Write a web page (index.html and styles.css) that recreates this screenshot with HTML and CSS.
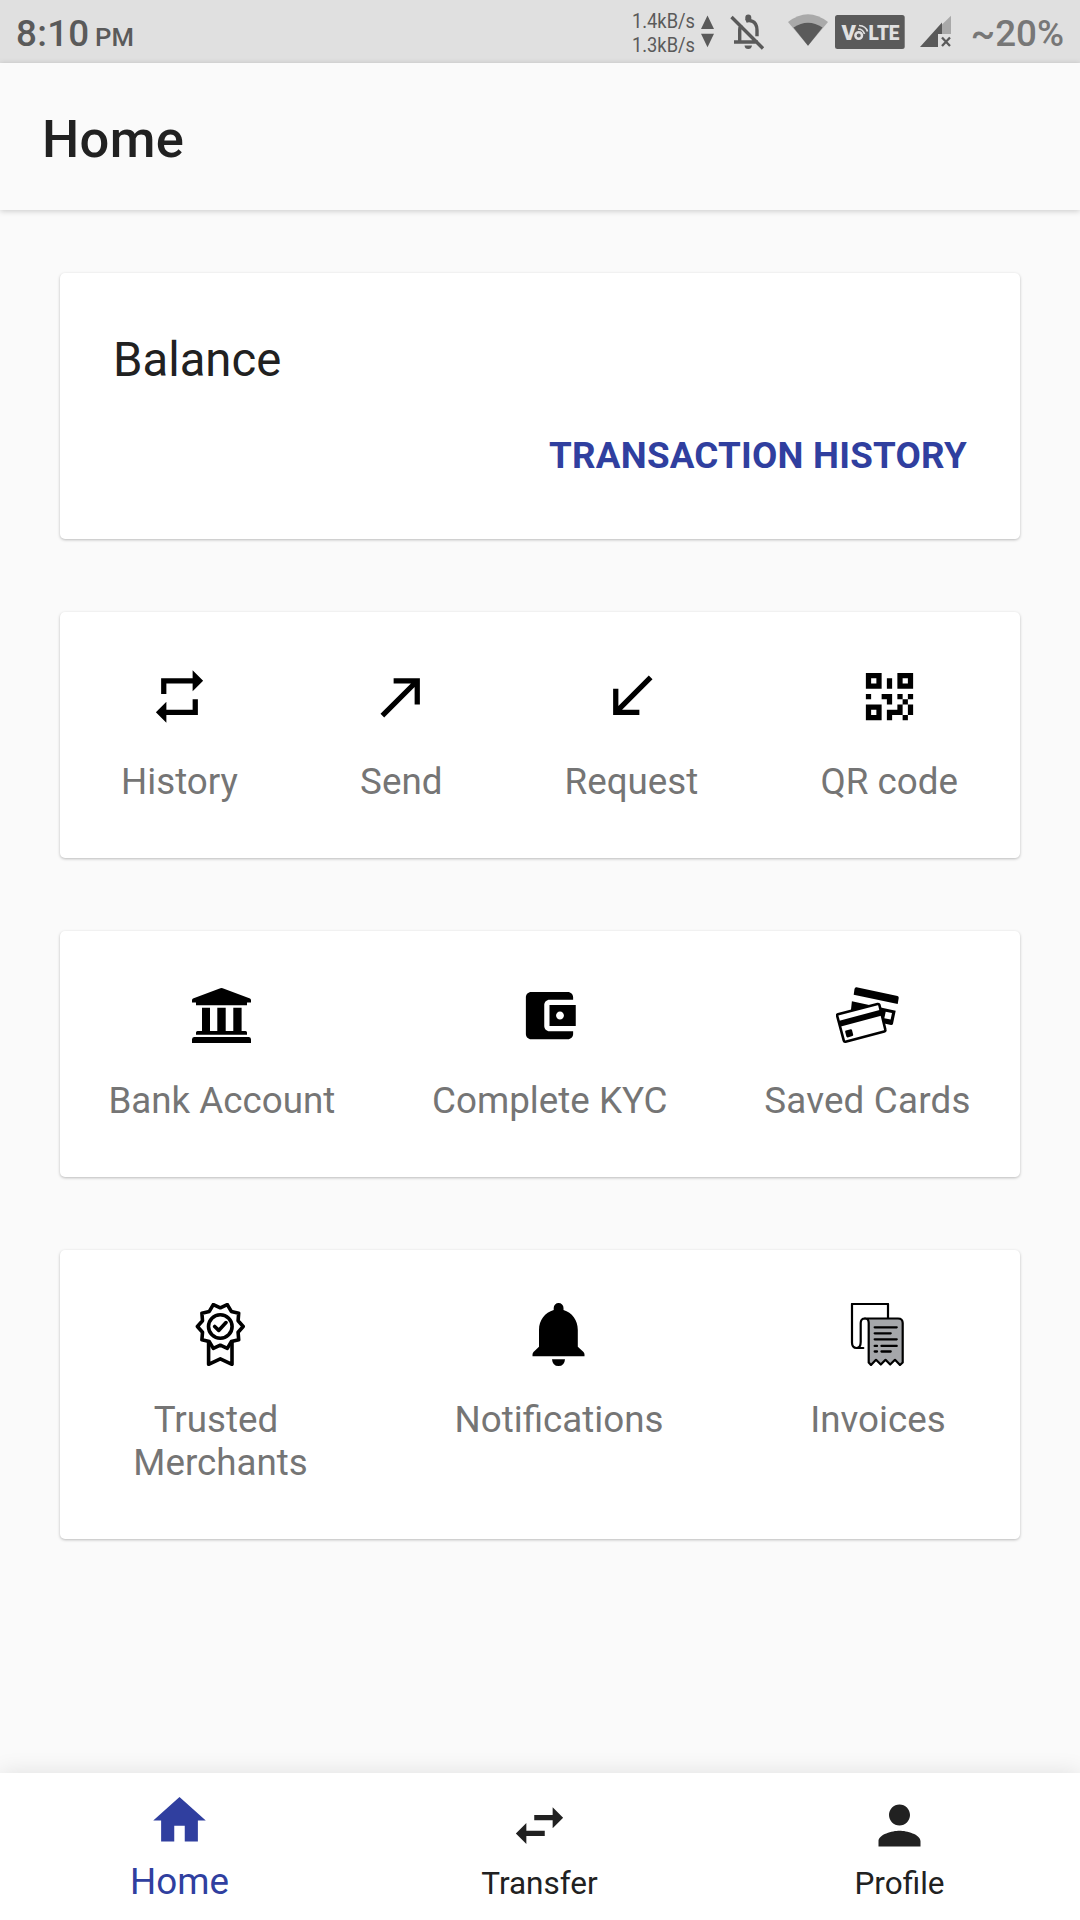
FILE: index.html
```html
<!DOCTYPE html>
<html lang="en">
<head>
<meta charset="utf-8">
<title>Home</title>
<link rel="stylesheet" href="styles.css">
</head>
<body>
<div class="screen">
  <div class="status">
    <span class="clock">8:10</span><span class="meridiem">PM</span>
    <div class="status-icons">
      <svg class="speed" width="84" height="63" viewBox="0 0 84 63">
        <text x="0" y="28" textLength="63" lengthAdjust="spacingAndGlyphs">1.4kB/s</text>
        <text x="0" y="52" textLength="63" lengthAdjust="spacingAndGlyphs">1.3kB/s</text>
        <path d="M69 29L75.500 15.500 82 29zM69 33.700h13L75.500 47.300z"/>
      </svg>
      <svg class="bell-off" width="36" height="63" viewBox="0 0 36 63">
        <g fill="none" stroke="#5a5a5a" stroke-width="3.400">
          <path d="M9.700 42V30q0-3 1.500-5.500M16 21.200q3-1.300 6 0 5 2 5 9v6M4 42h24M1.500 17L33 48.500"/>
        </g>
        <path fill="#5a5a5a" d="M15.300 20v-2.500a3 3 0 0 1 6 0V20zM14.500 45.500h7.500q-.5 3.500-3.800 3.500t-3.700-3.500z"/>
      </svg>
      <svg class="wifi" width="40" height="63" viewBox="0 0 40 63">
        <path fill="#a9a9a9" d="M0 22Q20 6.500 40 22L20 45.700z"/>
        <path fill="#5a5a5a" d="M5.500 27.500Q20 18 34.500 27.500L20 45.700z"/>
      </svg>
      <svg class="volte" width="70" height="63" viewBox="0 0 70 63">
        <rect y="15" width="69.700" height="34" rx="2.500" fill="#5a5a5a"/>
        <text x="6.500" y="39.500" textLength="14.500" lengthAdjust="spacingAndGlyphs">V</text>
        <text x="33.500" y="39.500" textLength="31" lengthAdjust="spacingAndGlyphs">LTE</text>
        <circle cx="23.700" cy="35.500" r="3.300" fill="none" stroke="#e0e0e0" stroke-width="2.500"/>
        <path d="M23 29q5 0 6.500 5M24 25.500q7 .5 8.500 6" fill="none" stroke="#e0e0e0" stroke-width="1.700"/>
      </svg>
      <svg class="signal" width="32" height="63" viewBox="0 0 32 63">
        <path fill="#a9a9a9" d="M31 15.700V34H22V24.500z"/>
        <path fill="#5a5a5a" d="M0 47L22 22.500V34h-4v13z"/>
        <path d="M22 37.500l8 8.500M30 37.500L22 46" stroke="#5a5a5a" stroke-width="2.300"/>
      </svg>
      <span class="battery">~20%</span>
    </div>
  </div>

  <header class="appbar"><h1>Home</h1></header>

  <main class="content">
    <section class="card balance">
      <h2>Balance</h2>
      <a class="history-link">TRANSACTION HISTORY</a>
    </section>

    <section class="card actions">
      <div class="action">
        <svg class="icon" viewBox="0 0 24 24"><path d="M7 7h10v3l4-4-4-4v3H5v6h2V7zm10 10H7v-3l-4 4 4 4v-3h12v-6h-2v4z"/></svg>
        <span class="label">History</span>
      </div>
      <div class="action">
        <svg class="icon" viewBox="0 0 24 24"><path d="M9 5v2h6.590L4 18.590 5.410 20 17 8.410V15h2V5z"/></svg>
        <span class="label">Send</span>
      </div>
      <div class="action">
        <svg class="icon" viewBox="0 0 24 24"><path d="M20 5.410L18.590 4 7 15.590V9H5v10h10v-2H8.410z"/></svg>
        <span class="label">Request</span>
      </div>
      <div class="action">
        <svg class="icon" viewBox="0 0 24 24"><path d="M3,11H5V13H3V11M11,5H13V9H11V5M9,11H13V15H11V13H9V11M15,11H17V13H19V11H21V13H19V15H21V19H19V21H17V19H13V21H11V17H15V15H17V13H15V11M19,19V15H17V19H19M15,3H21V9H15V3M17,5V7H19V5H17M3,3H9V9H3V3M5,5V7H7V5H5M3,15H9V21H3V15M5,17V19H7V17H5Z"/></svg>
        <span class="label">QR code</span>
      </div>
    </section>

    <section class="card actions">
      <div class="action">
        <svg class="icon" viewBox="0 0 63 63"><path d="M31.500 4Q32.500 4 34 4.800L60 14.600Q61 15.200 61 16.200V18.400H57V21.300H6V18.400H2V16.200Q2 15.200 3 14.600L29 4.800Q30.500 4 31.500 4zM12 23.700h8V47h7.300V23.700h8.400V47h7.600V23.700h8.300V47h3.900q1.500 0 1.500 1.500v2.300H6v-2.300Q6 47 7.500 47H12zM4 53h55q2 0 2 2.500V59H2v-3.500Q2 53 4 53z"/></svg>
        <span class="label">Bank Account</span>
      </div>
      <div class="action">
        <svg class="icon" viewBox="0 0 24 24"><path d="M21 18v1c0 1.100-.9 2-2 2H5c-1.110 0-2-.9-2-2V5c0-1.100.89-2 2-2h14c1.100 0 2 .9 2 2v1h-9c-1.110 0-2 .9-2 2v8c0 1.100.89 2 2 2h9zm-9-2h10V8H12v8zm4-2.500c-.83 0-1.500-.67-1.500-1.500s.67-1.500 1.500-1.500 1.500.67 1.500 1.500-.67 1.500-1.500 1.500z"/></svg>
        <span class="label">Complete KYC</span>
      </div>
      <div class="action">
        <svg class="icon" viewBox="0 0 63 63">
          <path d="M20.500 3.300L61.500 12Q63 12.500 62.700 14L61.700 19.900 17.700 10.700 18.500 5Q19 3 20.500 3.300z"/>
          <path fill-rule="evenodd" d="M15.900 17.200L59.700 26.700 57 39.800Q56.500 41.300 55 41L14.300 32zM49.700 27.800L48.300 34.300 54.600 35.600 56 29z"/>
          <path d="M2 30.300L41.500 20Q43 19.700 43.400 21L49.300 45.500Q49.700 47 48.200 47.400L9.500 57.700Q8.200 58 7.800 56.600L1.200 32Q.8 30.700 2 30.300z" fill="#fff" stroke="#000" stroke-width="2.600"/>
          <path d="M2.500 37L44.500 25.700 46 31.500 4 42.800zM10 46.600l4.700-1.300q1-.2 1.300.8l1.200 4.700q.2 1-.8 1.300L11.700 53.400q-1 .2-1.300-.8L9.200 47.900q-.2-1 .8-1.300z"/>
        </svg>
        <span class="label wide">Saved Cards</span>
      </div>
    </section>

    <section class="card actions">
      <div class="action">
        <svg class="icon" viewBox="0 0 63 63">
          <g fill="none" stroke="#000" stroke-width="3.600" stroke-linejoin="round" stroke-linecap="round" transform="translate(31.300 23.500)">
            <path d="M0-18.700L7-21.900 11-15.100 18.400-13.300 17.800-5.800 22.900 0 17.800 5.800 18.400 13.300 11 15.100 7 21.900 0 18.700-7 21.900-11 15.100-18.400 13.300-17.800 5.800-22.900 0-17.800-5.800-18.400-13.300-11-15.100-7-21.900z"/>
            <circle r="11.800"/>
            <path d="M-5.600 0l4 3.900 7.300-7.800M-11.700 16V37.800L0 32.400 11.700 37.800V16"/>
          </g>
        </svg>
        <span class="label">Trusted&nbsp;<br>Merchants</span>
      </div>
      <div class="action">
        <svg class="icon" viewBox="0 0 63 63"><path d="M26.700 7V5a4.900 5 0 0 1 9.800 0v2C45 9.500 50.800 17 50.800 27V43.700L56.500 49q1 1 1 2.500v1.700H5.500v-1.700q0-1.500 1-2.500L12 43.700V27C12 17 18 9.500 26.700 7zM25 56.200h13Q37.500 63 31.500 63T25 56.200z"/></svg>
        <span class="label">Notifications</span>
      </div>
      <div class="action">
        <svg class="icon" viewBox="0 0 63 63">
          <g fill="none" stroke="#000" stroke-width="2.200" stroke-linejoin="round" stroke-linecap="round">
            <path d="M42 15V1H6V39.500Q6 45 10.500 45H17.300M10.500 45Q14.700 45 14.700 39V20Q14.700 15.500 19 15.500"/>
            <path fill="#a5a7aa" d="M19 15.500H52Q56.700 15.500 56.700 20V59.500L54 62 49 56.800 44.200 61.500 39.500 56.800 34.800 61.500 30 56.800 25 62 22.700 59.500V20Q22.700 15.500 19 15.500z"/>
            <path d="M28.700 24.300H50.700M28.700 30.300H44.700M28.700 36.300H50.700M28.700 42.900H31M35.500 42.900H50.700M28.700 48.500H31M35.500 48.500H44.700" stroke-width="2.300"/>
          </g>
        </svg>
        <span class="label">Invoices</span>
      </div>
    </section>
  </main>

  <nav class="tabs">
    <div class="tab active">
      <svg class="icon" viewBox="0 0 24 24"><path d="M10 20v-6h4v6h5v-8h3L12 3 2 12h3v8z"/></svg>
      <span class="tab-label">Home</span>
    </div>
    <div class="tab">
      <svg class="icon" viewBox="0 0 24 24"><path d="M6.990 11L3 15l3.990 4v-3H14v-2H6.990v-3zM21 9l-3.990-4v3H10v2h7.010v3L21 9z"/></svg>
      <span class="tab-label">Transfer</span>
    </div>
    <div class="tab">
      <svg class="icon" viewBox="0 0 24 24"><path d="M12 12c2.210 0 4-1.790 4-4s-1.790-4-4-4-4 1.790-4 4 1.790 4 4 4zm0 2c-2.670 0-8 1.340-8 4v2h16v-2c0-2.660-5.330-4-8-4z"/></svg>
      <span class="tab-label">Profile</span>
    </div>
  </nav>
</div>
</body>
</html>
```
FILE: styles.css
```css
* { box-sizing: border-box; margin: 0; }

body {
  background: #fafafa;
  font-family: Roboto, "Liberation Sans", sans-serif;
}

.screen {
  width: 1080px;
  height: 1920px;
  display: flex;
  flex-direction: column;
  overflow: hidden;
}

.status {
  height: 63px;
  flex: none;
  display: flex;
  align-items: baseline;
  padding: 0 16px;
  background: #e0e0e0;
  color: #5a5a5a;
  font-weight: 500;
  line-height: 67px;
}
.clock, .battery { font-size: 36.75px; }
.clock { letter-spacing: 0.3px; }
.meridiem { font-size: 25.700px; margin-left: 5.500px; }
.battery { color: #777; margin-left: 18.500px; }
.status-icons {
  display: flex;
  align-self: stretch;
  margin-left: auto;
}
.status-icons svg { flex: none; display: block; }
.speed { fill: #5a5a5a; font-size: 21px; font-weight: 400; margin-right: 14px; }
.bell-off { margin-right: 22px; }
.wifi { margin-right: 7px; }
.volte { fill: #e0e0e0; font-size: 20px; font-weight: 900; margin-right: 15px; }

.appbar {
  height: 147px;
  flex: none;
  display: flex;
  align-items: center;
  padding: 4px 42px 0;
  box-shadow: 0 1px 6px rgba(0, 0, 0, 0.2);
}
.appbar h1 {
  font-size: 52.500px;
  font-weight: 500;
  line-height: 62px;
  letter-spacing: 0.3px;
  color: #212121;
}

.content {
  flex: 1;
  display: flex;
  flex-direction: column;
  gap: 73px;
  padding: 63px 60px 0;
}

.card {
  flex: none;
  background: #fff;
  border-radius: 5px;
  box-shadow: 0 1px 3px rgba(0, 0, 0, 0.26);
}

.balance {
  height: 266px;
  display: flex;
  flex-direction: column;
  padding: 59px 53px 0;
}
.balance h2 {
  font-size: 47.250px;
  font-weight: 400;
  line-height: 56px;
  color: #212121;
}
.history-link {
  align-self: flex-end;
  margin-top: 46px;
  font-size: 36.750px;
  font-weight: 700;
  line-height: 43px;
  letter-spacing: 0.22px;
  color: #303f9f;
}

.actions {
  display: flex;
  justify-content: space-around;
  padding: 53px 1px 55px 0;
}
.action {
  display: flex;
  flex-direction: column;
  align-items: center;
}
.icon { width: 63px; height: 63px; display: block; }
.label {
  margin-top: 32px;
  font-size: 36.750px;
  line-height: 43px;
  text-align: center;
  color: #757575;
}
.wide { letter-spacing: 0.2px; }

.tabs {
  height: 147px;
  flex: none;
  display: grid;
  grid-template-columns: repeat(3, 360px);
  background: #fff;
  box-shadow: 0 0 22px rgba(0, 0, 0, 0.11);
}
.tab {
  display: flex;
  flex-direction: column;
  align-items: center;
  padding: 21px 1px 0 0;
  color: #212121;
  fill: currentColor;
}
.tab-label { font-size: 31.500px; line-height: 37px; margin-top: 8px; }
.active { color: #303f9f; padding-top: 16px; }
.active .tab-label { font-size: 36.750px; line-height: 43px; }
```
